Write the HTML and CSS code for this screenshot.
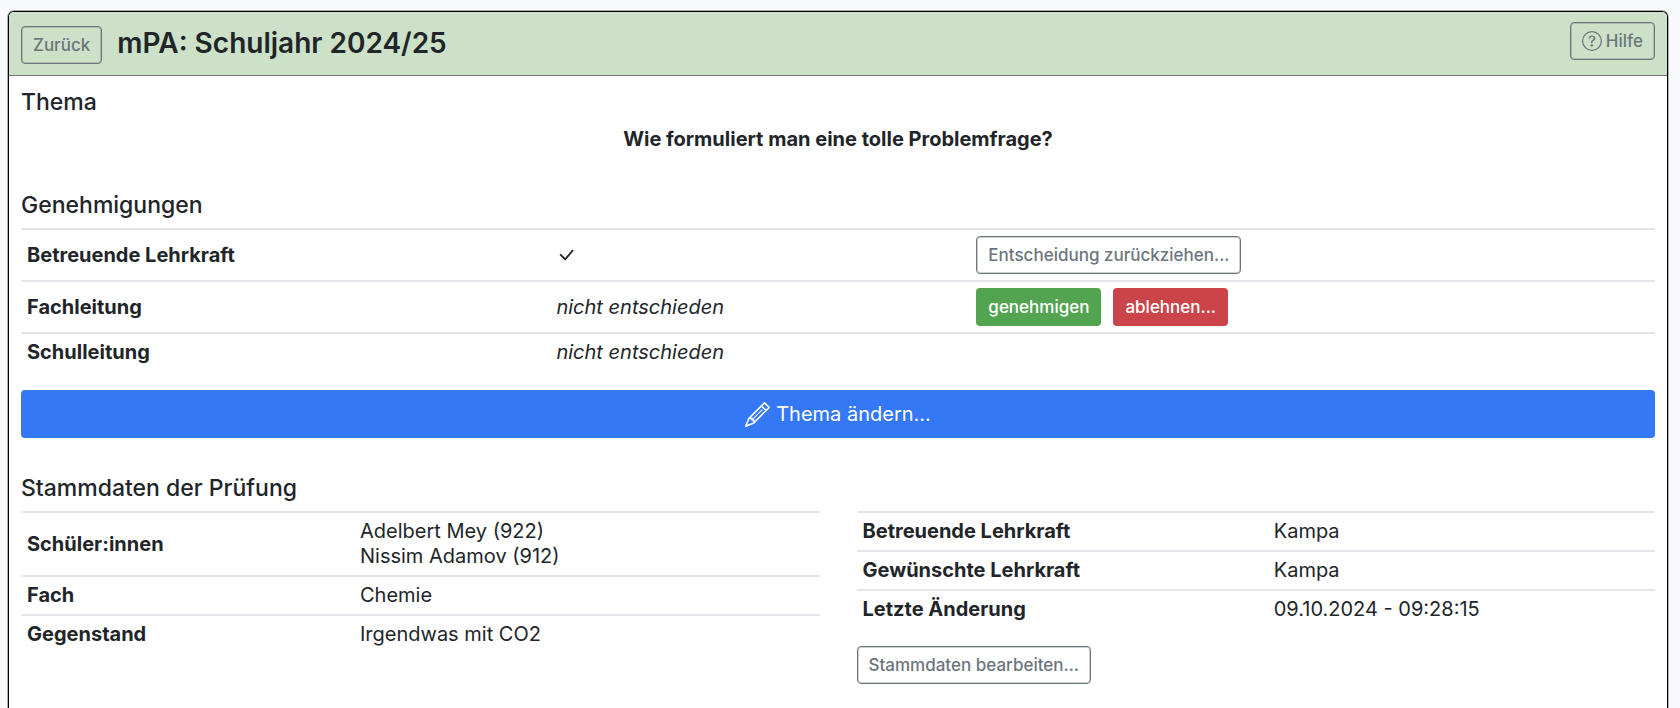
FILE: index.html
```
<!DOCTYPE html>
<html lang="de">
<head>
<meta charset="utf-8">
<meta name="viewport" content="width=device-width, initial-scale=1">
<title>mPA: Schuljahr 2024/25</title>
<link rel="stylesheet" href="styles.css">
</head>
<body>
<main class="card">
  <header class="card-header">
    <button type="button" class="btn btn-outline btn-back">Zurück</button>
    <h1 class="title">mPA: Schuljahr 2024/25</h1>
    <button type="button" class="btn btn-outline btn-help">
      <svg class="icon" viewBox="0 0 16 16" fill="currentColor" aria-hidden="true"><path d="M8 15A7 7 0 1 1 8 1a7 7 0 0 1 0 14m0 1A8 8 0 1 0 8 0a8 8 0 0 0 0 16"/><path d="M5.255 5.786a.237.237 0 0 0 .241.247h.825c.138 0 .248-.113.266-.25.09-.656.54-1.134 1.342-1.134.686 0 1.314.343 1.314 1.168 0 .635-.374.927-.965 1.371-.673.489-1.206 1.06-1.168 1.987l.003.217a.25.25 0 0 0 .25.246h.811a.25.25 0 0 0 .25-.25v-.105c0-.718.273-.927 1.01-1.486.609-.463 1.244-.977 1.244-2.056 0-1.511-1.276-2.241-2.673-2.241-1.267 0-2.655.59-2.75 2.286m1.557 5.763c0 .533.425.927 1.01.927.609 0 1.028-.394 1.028-.927 0-.552-.42-.94-1.029-.94-.584 0-1.009.388-1.009.94"/></svg>
      <span>Hilfe</span>
    </button>
  </header>
  <div class="card-body">
    <section>
      <h2 class="heading">Thema</h2>
      <p class="topic">Wie formuliert man eine tolle Problemfrage?</p>
    </section>
    <section class="section-approvals">
      <h2 class="heading">Genehmigungen</h2>
      <table class="table approvals">
        <tbody>
          <tr>
            <th scope="row">Betreuende Lehrkraft</th>
            <td><svg class="icon-check" viewBox="0 0 16 16" fill="currentColor" role="img" aria-label="genehmigt"><path d="M12.736 3.97a.733.733 0 0 1 1.047 0c.286.289.29.756.01 1.05L7.88 12.01a.733.733 0 0 1-1.065.02L3.217 8.384a.757.757 0 0 1 0-1.06.733.733 0 0 1 1.047 0l3.052 3.093 5.4-6.425z"/></svg></td>
            <td><div class="actions"><button type="button" class="btn btn-outline">Entscheidung zurückziehen...</button></div></td>
          </tr>
          <tr>
            <th scope="row">Fachleitung</th>
            <td><em>nicht entschieden</em></td>
            <td><div class="actions"><button type="button" class="btn btn-success">genehmigen</button><button type="button" class="btn btn-danger">ablehnen...</button></div></td>
          </tr>
          <tr>
            <th scope="row">Schulleitung</th>
            <td><em>nicht entschieden</em></td>
            <td></td>
          </tr>
        </tbody>
      </table>
      <button type="button" class="btn-primary">
        <svg class="icon-pencil" viewBox="0 0 16 16" fill="currentColor" aria-hidden="true"><path d="M12.146.146a.5.5 0 0 1 .708 0l3 3a.5.5 0 0 1 0 .708l-10 10a.5.5 0 0 1-.168.11l-5 2a.5.5 0 0 1-.65-.65l2-5a.5.5 0 0 1 .11-.168zM11.207 2.5 13.5 4.793 14.793 3.5 12.5 1.207zm1.586 3L10.5 3.207 4 9.707V10h.5a.5.5 0 0 1 .5.5v.5h.5a.5.5 0 0 1 .5.5v.5h.293zm-9.761 5.175-.106.106-1.528 3.821 3.821-1.528.106-.106A.5.5 0 0 1 5 12.5V12h-.5a.5.5 0 0 1-.5-.5V11h-.5a.5.5 0 0 1-.468-.325"/><path d="M10.9 4.7l.4.4-6.2 6.2-.4-.4z"/></svg>
        <span>Thema ändern...</span>
      </button>
    </section>
    <section class="section-data">
      <h2 class="heading">Stammdaten der Prüfung</h2>
      <div class="columns">
        <table class="table exam">
          <tbody>
            <tr><th scope="row">Schüler:innen</th><td>Adelbert Mey (922)<br>Nissim Adamov (912)</td></tr>
            <tr><th scope="row">Fach</th><td>Chemie</td></tr>
            <tr><th scope="row">Gegenstand</th><td>Irgendwas mit CO2</td></tr>
          </tbody>
        </table>
        <div>
          <table class="table teacher">
            <tbody>
              <tr><th scope="row">Betreuende Lehrkraft</th><td>Kampa</td></tr>
              <tr><th scope="row">Gewünschte Lehrkraft</th><td>Kampa</td></tr>
              <tr><th scope="row">Letzte Änderung</th><td>09.10.2024 - 09:28:15</td></tr>
            </tbody>
          </table>
          <button type="button" class="btn btn-outline btn-edit">Stammdaten bearbeiten...</button>
        </div>
      </div>
    </section>
  </div>
</main>
</body>
</html>
```

FILE: styles.css
```
* {
  box-sizing: border-box;
}

html {
  height: 100%;
}

body {
  display: flex;
  height: 100%;
  margin: 0;
  padding: 11px 12px 0 8px;
  overflow: hidden;
  background: #f8f9fc;
  color: #212529;
  font-family: Inter, "Liberation Sans", sans-serif;
  font-size: 20px;
  line-height: 25px;
}

button {
  font-family: inherit;
  cursor: pointer;
}

.card {
  flex: 1;
  min-width: 0;
  border: 1px solid #000;
  border-bottom: 0;
  border-radius: 6px 6px 0 0;
  background: #fff;
  box-shadow: 0 0 0 1px rgba(0, 0, 0, 0.3);
}

.card-header {
  display: flex;
  align-items: flex-start;
  padding: 10px 12px 11px;
  border-bottom: 1px solid #777;
  border-radius: 5px 5px 0 0;
  background: #cce1c7;
}

.title {
  flex: 1;
  margin: 0 0 0 15px;
  font-size: 28px;
  font-weight: 600;
  line-height: 42px;
}

.btn {
  display: inline-flex;
  align-items: center;
  gap: 4px;
  height: 38px;
  padding: 0 11px;
  border: 1px solid transparent;
  border-radius: 4px;
  color: #fff;
  font-size: 17px;
  font-weight: 500;
  line-height: 24px;
  white-space: nowrap;
}

.btn-outline {
  border-color: #6c757d;
  background: transparent;
  box-shadow: inset 0 0 0 1px rgba(108, 117, 125, 0.35);
  color: #6c757d;
}

.btn-success {
  background: #53a451;
}

.btn-danger {
  background: #cb444a;
}

.btn-back {
  margin-top: 4px;
}

.icon {
  width: 20px;
  height: 20px;
}

.card-body {
  padding: 11px 12px;
}

.heading {
  margin: 0;
  font-size: 23px;
  font-weight: 500;
  line-height: 30px;
}

.topic {
  margin: 10px 0 0;
  font-weight: 700;
  text-align: center;
}

.section-approvals {
  margin-top: 38px;
}

.section-data {
  margin-top: 35px;
}

.table {
  width: 100%;
  margin-top: 8px;
  border-collapse: collapse;
  table-layout: fixed;
}

.table th,
.table td {
  padding: 6px;
  border-top: 2px solid #e4e7ea;
  text-align: left;
  vertical-align: middle;
}

.table th {
  font-weight: 700;
}

.approvals th {
  width: 32.4%;
}

.approvals td:nth-child(2) {
  width: 25.7%;
}

.exam th {
  width: 41.7%;
}

.teacher th {
  width: 51.5%;
}

.actions {
  display: flex;
  gap: 12px;
}

.icon-check {
  display: block;
  width: 20px;
  height: 20px;
}

.btn-primary {
  display: flex;
  align-items: center;
  justify-content: center;
  gap: 6px;
  width: 100%;
  height: 48px;
  margin-top: 19px;
  border: 0;
  border-radius: 4px;
  background: #3578f6;
  color: #fff;
  font-size: 20px;
  line-height: 25px;
}

.icon-pencil {
  width: 25px;
  height: 25px;
}

.columns {
  display: grid;
  grid-template-columns: 1fr 1fr;
  align-items: start;
  gap: 37px;
}

.btn-edit {
  margin-top: 18px;
}
```
